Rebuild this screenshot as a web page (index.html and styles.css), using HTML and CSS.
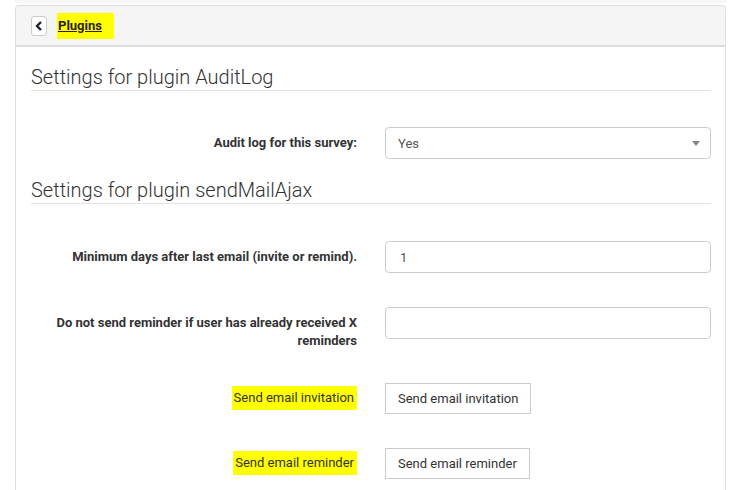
FILE: index.html
```html
<!DOCTYPE html>
<html lang="en">
<head>
    <meta charset="UTF-8">
    <meta name="viewport" content="width=device-width, initial-scale=1.0">
    <title>Plugin settings</title>
    <link rel="stylesheet" href="styles.css">
</head>
<body>
    <div class="top-strip"></div>
    <div class="panel">
        <div class="panel-heading">
            <a class="back-btn" href="#">
                <svg width="8" height="10" viewBox="0 0 8 10"><polyline points="6,1 2,5 6,9" fill="none" stroke="#1b2430" stroke-width="2.4"/></svg>
            </a>
            <a class="plugins-link marker" href="#">Plugins</a>
        </div>
        <div class="panel-body">
            <h3 class="section-title">Settings for plugin AuditLog</h3>
            <div class="field">
                <label class="field-label">Audit log for this survey:</label>
                <div class="field-control">
                    <div class="select">
                        <span>Yes</span>
                        <span class="caret"></span>
                    </div>
                </div>
            </div>

            <h3 class="section-title second">Settings for plugin sendMailAjax</h3>
            <div class="field">
                <label class="field-label">Minimum days after last email (invite or remind).</label>
                <div class="field-control">
                    <input class="text-input" type="text" value="1">
                </div>
            </div>
            <div class="field">
                <label class="field-label">Do not send reminder if user has already received X reminders</label>
                <div class="field-control">
                    <input class="text-input" type="text" value="">
                </div>
            </div>
            <div class="field tight">
                <div class="field-label plain"><span class="marker">Send email invitation</span></div>
                <div class="field-control">
                    <button class="btn">Send email invitation</button>
                </div>
            </div>
            <div class="field">
                <div class="field-label plain"><span class="marker">Send email reminder</span></div>
                <div class="field-control">
                    <button class="btn">Send email reminder</button>
                </div>
            </div>
        </div>
    </div>
</body>
</html>
```

FILE: styles.css
```css
body {
    font-family: Roboto, "Liberation Sans", Arial, sans-serif;
    font-size: 13px;
    color: #333;
    margin: 0;
    padding: 0;
    background: #fff;
}
.top-strip {
    height: 3px;
    margin: 0 16px 0 15px;
    background: #f7f7f7;
}
.panel {
    width: 711px;
    height: 520px;
    box-sizing: border-box;
    margin: 2px 0 0 15px;
    border: 1px solid #ddd;
    border-bottom: none;
    border-radius: 4px 4px 0 0;
}
.panel-heading {
    display: flex;
    align-items: center;
    height: 39px;
    padding: 0 15px;
    background: #f5f5f5;
    border-bottom: 2px solid #ddd;
    border-radius: 3px 3px 0 0;
}
.back-btn {
    display: flex;
    align-items: center;
    justify-content: center;
    width: 16px;
    height: 20px;
    box-sizing: border-box;
    background: #fff;
    border: 1px solid #ccc;
    border-radius: 3px;
}
.plugins-link {
    margin-left: 10px;
    padding: 5px 12px 6px 1px;
    font-weight: bold;
    color: #2b2222;
    text-decoration: underline;
}
.marker {
    background: #ffff00;
}
.panel-body {
    display: flex;
    flex-direction: column;
    padding: 19px 14px 0 15px;
}
.section-title {
    margin: 0 0 2px;
    padding-bottom: 2px;
    font-size: 20px;
    font-weight: 300;
    line-height: 22px;
    border-bottom: 1px solid #e3e3e3;
}
.section-title.second {
    margin-top: 20px;
    margin-bottom: 3px;
}
.field {
    display: flex;
    margin-top: 34px;
}
.field.tight {
    margin-top: 33px;
}
.field-label {
    width: 326px;
    padding-top: 7px;
    line-height: 18px;
    font-weight: bold;
    text-align: right;
}
.field-label.plain {
    font-weight: normal;
    padding-top: 6px;
}
.field-label.plain .marker {
    padding: 4px 3px 5px 2px;
}
.field-control {
    flex: 1;
    margin-left: 28px;
}
.select {
    display: flex;
    justify-content: space-between;
    align-items: center;
    height: 32px;
    box-sizing: border-box;
    padding: 0 10px 0 12px;
    border: 1px solid #ccc;
    border-radius: 4px;
    color: #555;
}
.caret {
    width: 0;
    height: 0;
    border-left: 4px solid transparent;
    border-right: 4px solid transparent;
    border-top: 5px solid #888;
}
.text-input {
    display: block;
    width: 100%;
    height: 32px;
    box-sizing: border-box;
    padding: 0 14px;
    border: 1px solid #ccc;
    border-radius: 4px;
    font-family: inherit;
    font-size: 13px;
    color: #555;
}
.btn {
    height: 31px;
    padding: 0 12px;
    background: #fff;
    border: 1px solid #ccc;
    border-radius: 0;
    font-family: inherit;
    font-size: 13px;
    color: #333;
}
```
